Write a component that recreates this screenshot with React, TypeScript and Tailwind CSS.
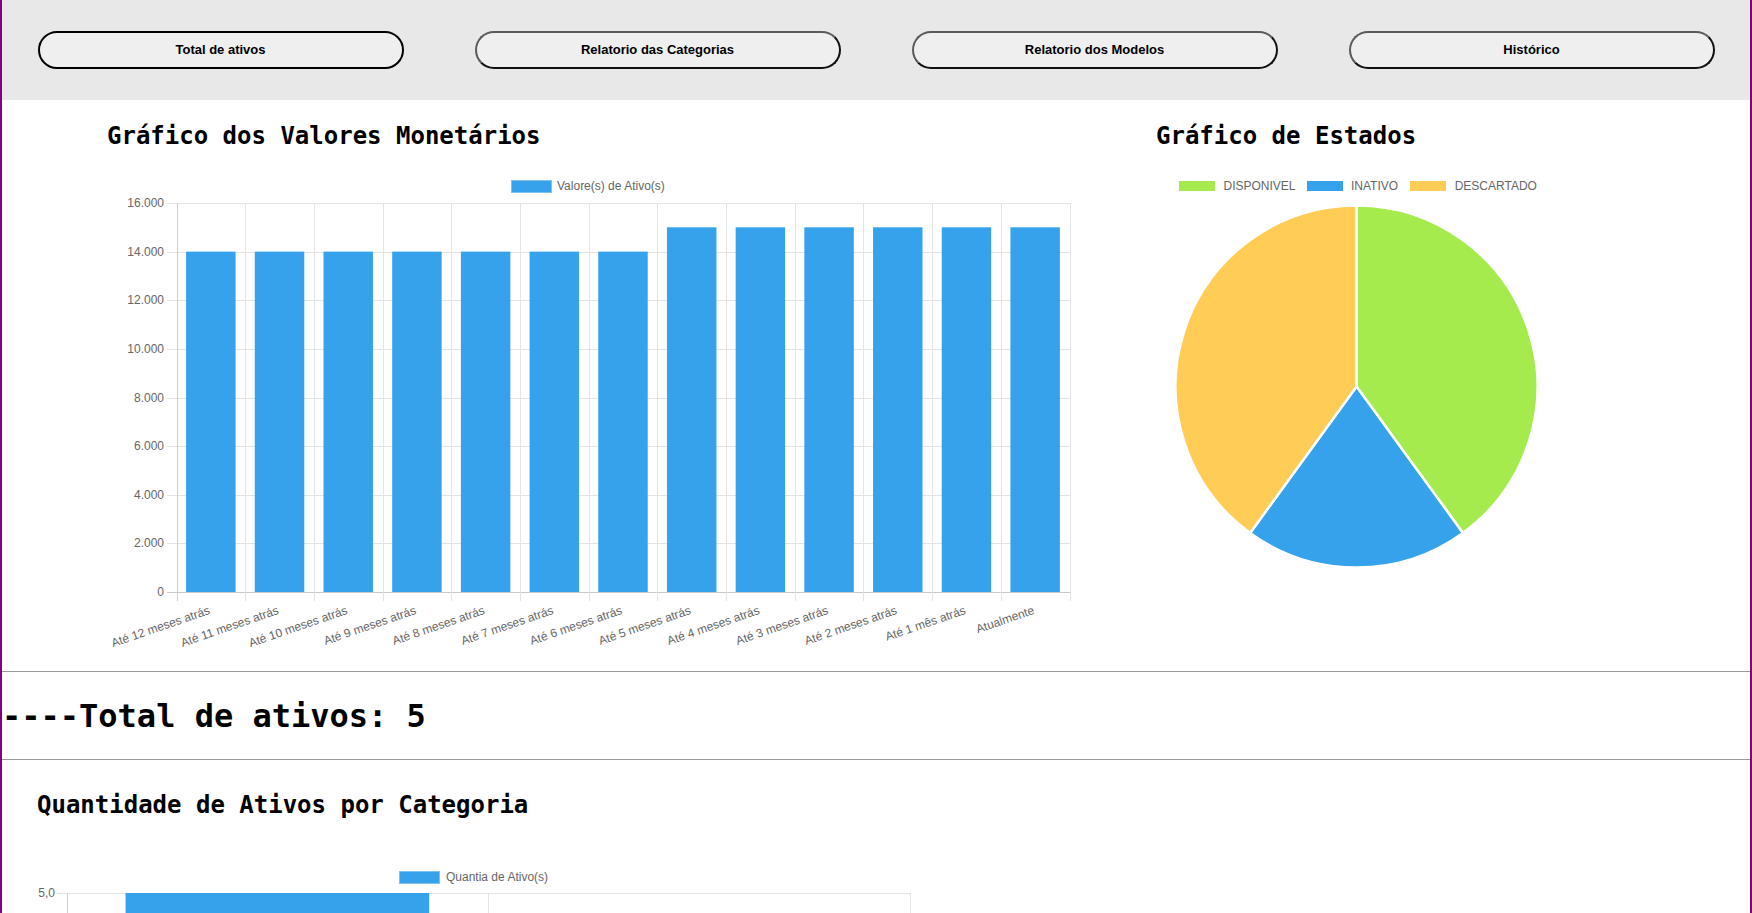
import React from "react";

const FONT = "Liberation Sans, Arial, Helvetica, sans-serif";

const barLabels = [
  "Até 12 meses atrás",
  "Até 11 meses atrás",
  "Até 10 meses atrás",
  "Até 9 meses atrás",
  "Até 8 meses atrás",
  "Até 7 meses atrás",
  "Até 6 meses atrás",
  "Até 5 meses atrás",
  "Até 4 meses atrás",
  "Até 3 meses atrás",
  "Até 2 meses atrás",
  "Até 1 mês atrás",
  "Atualmente",
];
const barValues = [14000, 14000, 14000, 14000, 14000, 14000, 14000, 15000, 15000, 15000, 15000, 15000, 15000];

function fmtThousands(v: number) {
  return v === 0 ? "0" : `${v / 1000}.000`;
}

function BarChart() {
  const W = 964;
  const H = 480;
  const left = 69.5;
  const right = 962.5;
  const top = 33;
  const bottom = 422;
  const max = 16000;
  const n = barLabels.length;
  const cw = (right - left) / n;
  const ticks = [16000, 14000, 12000, 10000, 8000, 6000, 4000, 2000, 0];
  const yOf = (v: number) => bottom - (v / max) * (bottom - top);
  const bw = cw * 0.72;
  return (
    <svg width={W} height={H} viewBox={`0 0 ${W} ${H}`} className="block">
      <rect x={404.5} y={10.5} width={40} height={12} fill="#36a2eb" stroke="#7fc1ef" strokeWidth={1} />
      <text x={450} y={19.5} fontSize={12} fill="#666" fontFamily={FONT}>
        Valore(s) de Ativo(s)
      </text>
      {ticks.map((t) => {
        const y = Math.round(yOf(t)) + 0.5;
        return (
          <g key={t}>
            <line
              x1={left - 10}
              x2={right}
              y1={y}
              y2={y}
              stroke={t === 0 ? "#c9c9c9" : "#e4e4e4"}
              strokeWidth={1}
              shapeRendering="crispEdges"
            />
            <text x={57} y={y + 3.5} fontSize={12} fill="#666" textAnchor="end" fontFamily={FONT}>
              {fmtThousands(t)}
            </text>
          </g>
        );
      })}
      {Array.from({ length: n + 1 }).map((_, j) => {
        const x = Math.round(left + j * cw) + 0.5;
        return (
          <line
            key={j}
            x1={x}
            x2={x}
            y1={top}
            y2={bottom + 9}
            stroke={j === 0 ? "#cfcfcf" : "#e4e4e4"}
            strokeWidth={1}
            shapeRendering="crispEdges"
          />
        );
      })}
      {barValues.map((v, i) => {
        const cx = left + (i + 0.5) * cw;
        const y = yOf(v);
        return <rect key={i} x={cx - bw / 2} y={y} width={bw} height={bottom - y} fill="#36a2eb" />;
      })}
      {barLabels.map((l, i) => {
        const cx = left + (i + 0.5) * cw;
        return (
          <text
            key={l}
            transform={`translate(${cx - 3} ${bottom + 13}) rotate(-19)`}
            x={0}
            y={9}
            fontSize={12}
            fill="#666"
            textAnchor="end"
            fontFamily={FONT}
          >
            {l}
          </text>
        );
      })}
    </svg>
  );
}

function PieChart() {
  const W = 400;
  const H = 410;
  const cx = 200.5;
  const cy = 216.5;
  const r = 181;
  const data = [
    { label: "DISPONIVEL", value: 2, color: "#a5eb4e" },
    { label: "INATIVO", value: 1, color: "#36a2eb" },
    { label: "DESCARTADO", value: 2, color: "#ffcd56" },
  ];
  const total = data.reduce((s, d) => s + d.value, 0);
  let acc = 0;
  const pt = (a: number) => [cx + r * Math.sin(a), cy - r * Math.cos(a)];
  const legend = [
    { box: 23, text: 67.5 },
    { box: 151, text: 195 },
    { box: 254, text: 298.7 },
  ];
  return (
    <svg width={W} height={H} viewBox={`0 0 ${W} ${H}`} className="block">
      {data.map((d, i) => (
        <g key={d.label}>
          <rect x={legend[i].box} y={11} width={36} height={10} fill={d.color} />
          <text x={legend[i].text} y={19.5} fontSize={12} fill="#666" fontFamily={FONT}>
            {d.label}
          </text>
        </g>
      ))}
      {data.map((d) => {
        const a0 = (acc / total) * Math.PI * 2;
        acc += d.value;
        const a1 = (acc / total) * Math.PI * 2;
        const [x0, y0] = pt(a0);
        const [x1, y1] = pt(a1);
        const large = a1 - a0 > Math.PI ? 1 : 0;
        return (
          <path
            key={d.label}
            d={`M ${cx} ${cy} L ${x0} ${y0} A ${r} ${r} 0 ${large} 1 ${x1} ${y1} Z`}
            fill={d.color}
            stroke="#fff"
            strokeWidth={2.5}
            strokeLinejoin="round"
          />
        );
      })}
    </svg>
  );
}

function CategoryChart() {
  const W = 880;
  const H = 440;
  const left = 29.5;
  const right = 873;
  const top = 33;
  const bottom = 393;
  const cats = ["Computadores", "Monitores"];
  const vals = [5, 0];
  const cw = (right - left) / cats.length;
  const bw = cw * 0.72;
  const ticks = [5, 4.5, 4, 3.5, 3, 2.5, 2, 1.5, 1, 0.5, 0];
  const yOf = (v: number) => bottom - (v / 5) * (bottom - top);
  return (
    <svg width={W} height={H} viewBox={`0 0 ${W} ${H}`} className="block">
      <rect x={362.5} y={11.5} width={40} height={12} fill="#36a2eb" stroke="#7fc1ef" strokeWidth={1} />
      <text x={409} y={20.5} fontSize={12} fill="#666" fontFamily={FONT}>
        Quantia de Ativo(s)
      </text>
      {ticks.map((t) => {
        const y = Math.round(yOf(t)) + 0.5;
        return (
          <g key={t}>
            <line
              x1={left - 10}
              x2={right}
              y1={y}
              y2={y}
              stroke={t === 0 ? "#c9c9c9" : "#e4e4e4"}
              strokeWidth={1}
              shapeRendering="crispEdges"
            />
            <text x={18} y={y + 3.5} fontSize={12} fill="#666" textAnchor="end" fontFamily={FONT}>
              {t.toFixed(1).replace(".", ",")}
            </text>
          </g>
        );
      })}
      {Array.from({ length: cats.length + 1 }).map((_, j) => {
        const x = Math.round(left + j * cw) + 0.5;
        return (
          <line
            key={j}
            x1={x}
            x2={x}
            y1={top}
            y2={bottom + 9}
            stroke={j === 0 ? "#cfcfcf" : "#e4e4e4"}
            strokeWidth={1}
            shapeRendering="crispEdges"
          />
        );
      })}
      {vals.map((v, i) => {
        const cx = left + (i + 0.5) * cw;
        const y = yOf(v);
        return <rect key={i} x={cx - bw / 2} y={y} width={bw} height={bottom - y} fill="#36a2eb" />;
      })}
      {cats.map((c, i) => (
        <text
          key={c}
          x={left + (i + 0.5) * cw}
          y={bottom + 24}
          fontSize={12}
          fill="#666"
          textAnchor="middle"
          fontFamily={FONT}
        >
          {c}
        </text>
      ))}
    </svg>
  );
}

const navButtons = ["Total de ativos", "Relatorio das Categorias", "Relatorio dos Modelos", "Histórico"];

export default function App() {
  return (
    <div className="min-h-screen w-full bg-white border-x-2 border-[#800080] overflow-hidden">
      <header className="h-[100px] bg-[#e8e8e8] flex items-center justify-around">
        {navButtons.map((b, i) => (
          <button
            key={b}
            className={`w-[366px] h-[38px] rounded-full border-2 bg-[#efefef] text-[13px] font-bold text-black font-['Liberation_Sans',Arial,sans-serif] ${
              i === 0 ? "border-black" : "border-[#111] border-t-[#5a5a5a] border-l-[#5a5a5a]"
            }`}
          >
            {b}
          </button>
        ))}
      </header>

      <section className="flex pl-[105px] pt-[20px]">
        <div className="w-[964px]">
          <h2 className="h-8 text-[24px] leading-8 font-bold text-black font-['DejaVu_Sans_Mono',monospace] whitespace-nowrap">
            Gráfico dos Valores Monetários
          </h2>
          <div className="mt-[18px]">
            <BarChart />
          </div>
        </div>
        <div className="w-[400px] ml-[85px]">
          <h2 className="h-8 text-[24px] leading-8 font-bold text-black font-['DejaVu_Sans_Mono',monospace] whitespace-nowrap">
            Gráfico de Estados
          </h2>
          <div className="mt-[18px]">
            <PieChart />
          </div>
        </div>
      </section>

      <div className="mt-[21px] h-px bg-[#9a9a9a]" />

      <h1 className="mt-[24px] text-[32px] leading-[40px] font-bold text-black font-['DejaVu_Sans_Mono',monospace] whitespace-nowrap">
        ----Total de ativos: 5
      </h1>

      <div className="mt-[23px] h-px bg-[#9a9a9a]" />

      <section className="pl-[35px] pt-[29px]">
        <h2 className="h-8 text-[24px] leading-8 font-bold text-black font-['DejaVu_Sans_Mono',monospace] whitespace-nowrap">
          Quantidade de Ativos por Categoria
        </h2>
        <div className="mt-[39px]">
          <CategoryChart />
        </div>
      </section>
    </div>
  );
}
